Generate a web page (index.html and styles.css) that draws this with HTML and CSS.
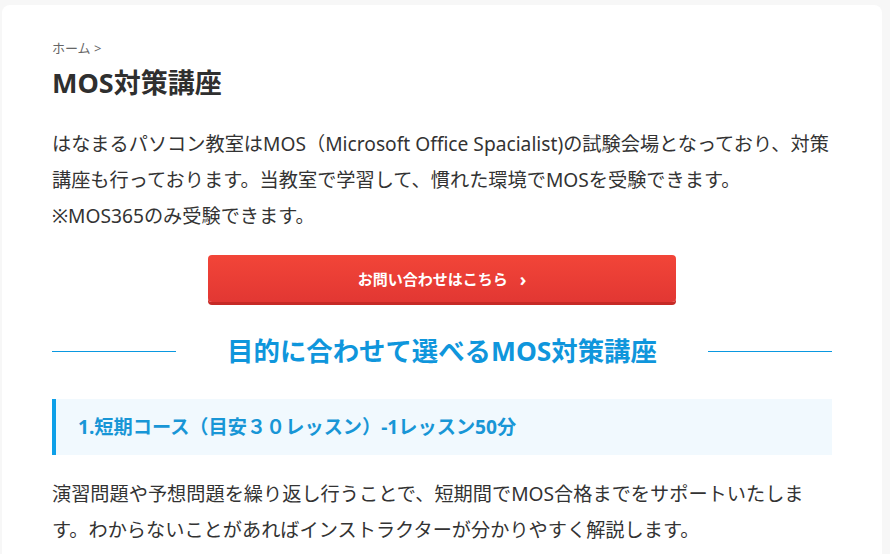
FILE: index.html
```html
<!DOCTYPE html>
<html lang="ja">
<head>
    <meta charset="UTF-8">
    <meta name="viewport" content="width=device-width, initial-scale=1.0">
    <title>MOS対策講座</title>
    <link rel="stylesheet" href="styles.css">
</head>
<body>
    <main class="page">
        <div class="breadcrumb">ホーム &gt;</div>
        <h1 class="page-title">MOS対策講座</h1>

        <p class="lead">はなまるパソコン教室はMOS（Microsoft Office Spacialist)の試験会場となっており、対策講座も行っております。当教室で学習して、慣れた環境でMOSを受験できます。<br>※MOS365のみ受験できます。</p>

        <div class="btn-wrap">
            <a class="btn-contact" href="#">お問い合わせはこちら <span class="arrow">›</span></a>
        </div>

        <h2 class="section-title"><span>目的に合わせて選べるMOS対策講座</span></h2>

        <h3 class="course-title">1.短期コース（目安３０レッスン）-1レッスン50分</h3>

        <p class="lead">演習問題や予想問題を繰り返し行うことで、短期間でMOS合格までをサポートいたします。わからないことがあればインストラクターが分かりやすく解説します。</p>
    </main>
</body>
</html>
```

FILE: styles.css
```css
body {
    margin: 0;
    background: #f7f7f7;
    font-family: "Noto Sans", "Noto Sans CJK JP", sans-serif;
    color: #333;
}

.page {
    margin: 5px 8px 0 2px;
    background: #fff;
    border-radius: 8px 8px 0 0;
    padding: 34px 50px 40px 50px;
    min-height: 600px;
}

.breadcrumb {
    font-size: 13px;
    color: #666;
    line-height: 18px;
}

.page-title {
    margin: 8px 0 25px;
    font-size: 27px;
    font-weight: bold;
    line-height: 36px;
    color: #2f2f2f;
}

.lead {
    margin: 0;
    font-size: 19.2px;
    line-height: 36px;
}

.btn-wrap {
    display: flex;
    justify-content: center;
    margin: 21px 0 29px;
}

.btn-contact {
    display: flex;
    align-items: center;
    justify-content: center;
    gap: 8px;
    width: 468px;
    height: 47px;
    box-sizing: border-box;
    background: linear-gradient(#f24538, #e23733);
    border-radius: 4px;
    box-shadow: 0 3px 0 #c62a26;
    color: #fff;
    font-size: 15px;
    font-weight: bold;
    text-decoration: none;
}

.btn-contact .arrow {
    font-size: 18px;
    margin-left: 4px;
}

.section-title {
    display: flex;
    align-items: center;
    gap: 51px;
    margin: 0 0 27px;
    color: #0f96dc;
    font-size: 26.4px;
    font-weight: bold;
    line-height: 41px;
}

.section-title::before,
.section-title::after {
    content: "";
    flex: 1;
    height: 1px;
    background: #0a98e0;
}

.course-title {
    margin: 0 0 21px;
    padding: 13px 22px;
    background: #f1f9fe;
    border-left: 4px solid #0ea0e8;
    color: #1896d6;
    font-size: 19.2px;
    font-weight: bold;
    line-height: 30px;
}
```
